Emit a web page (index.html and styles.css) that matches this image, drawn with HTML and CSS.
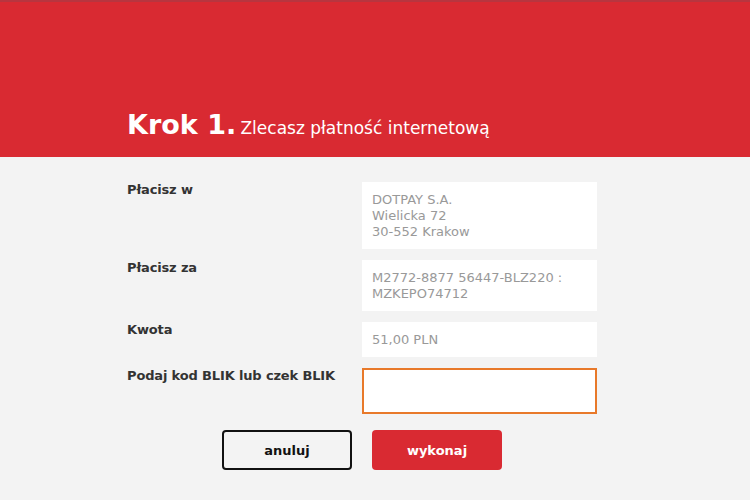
FILE: index.html
```html
<!DOCTYPE html>
<html lang="pl">
<head>
<meta charset="utf-8">
<title>Krok 1</title>
<link rel="stylesheet" href="styles.css">
</head>
<body>
<header class="header">
  <div class="header-inner">
    <h1 class="title"><span class="step">Krok 1.</span> <span class="subtitle">Zlecasz płatność internetową</span></h1>
  </div>
</header>
<main class="content">
  <div class="row">
    <div class="label">Płacisz w</div>
    <div class="value">DOTPAY S.A.<br>Wielicka 72<br>30-552 Krakow</div>
  </div>
  <div class="row">
    <div class="label">Płacisz za</div>
    <div class="value">M2772-8877 56447-BLZ220 :<br>MZKEPO74712</div>
  </div>
  <div class="row">
    <div class="label">Kwota</div>
    <div class="value">51,00 PLN</div>
  </div>
  <div class="row">
    <div class="label">Podaj kod BLIK lub czek BLIK</div>
    <input class="code-input" type="text" aria-label="Kod BLIK">
  </div>
  <div class="actions">
    <button class="btn btn-cancel" type="button">anuluj</button>
    <button class="btn btn-submit" type="button">wykonaj</button>
  </div>
</main>
</body>
</html>
```
FILE: styles.css
```css
html, body {
  margin: 0;
  padding: 0;
}
body {
  background: #f3f3f3;
  font-family: Verdana, "DejaVu Sans", sans-serif;
  font-size: 13px;
  color: #333;
}
.header {
  background: #d92a32;
  border-top: 2px solid #b8353f;
  height: 155px;
  display: flex;
  align-items: flex-end;
}
.header-inner {
  margin-left: 127px;
  padding-bottom: 19px;
}
.title {
  margin: 0;
  color: #fff;
  font-weight: normal;
  line-height: 1;
}
.step {
  font-size: 27px;
  font-weight: bold;
}
.subtitle {
  font-size: 17px;
  margin-left: -4px;
}
.content {
  width: 469px;
  margin-left: 128px;
  padding-top: 25px;
}
.row {
  display: flex;
  margin-bottom: 11px;
}
.label {
  width: 234px;
  font-weight: bold;
  line-height: 16px;
  color: #333;
  letter-spacing: -0.15px;
  margin-left: -1px;
  padding-right: 1px;
}
.value {
  width: 235px;
  box-sizing: border-box;
  background: #fff;
  color: #999;
  line-height: 16px;
  padding: 10px 10px 9px 10px;
}
.code-input {
  width: 235px;
  height: 46px;
  box-sizing: border-box;
  border: 2px solid #e8792a;
  background: #fff;
  margin: 0;
  padding: 0 10px;
  font: inherit;
  outline: none;
}
.actions {
  display: flex;
  justify-content: flex-start;
  gap: 20px;
  padding-top: 5px;
  padding-left: 94px;
}
.btn {
  width: 130px;
  height: 40px;
  box-sizing: border-box;
  border-radius: 4px;
  font-family: Verdana, "DejaVu Sans", sans-serif;
  font-size: 13px;
  font-weight: bold;
  cursor: pointer;
}
.btn-cancel {
  background: #f3f3f3;
  border: 2px solid #111;
  color: #111;
}
.btn-submit {
  background: #d92a32;
  border: none;
  color: #fff;
}
```
